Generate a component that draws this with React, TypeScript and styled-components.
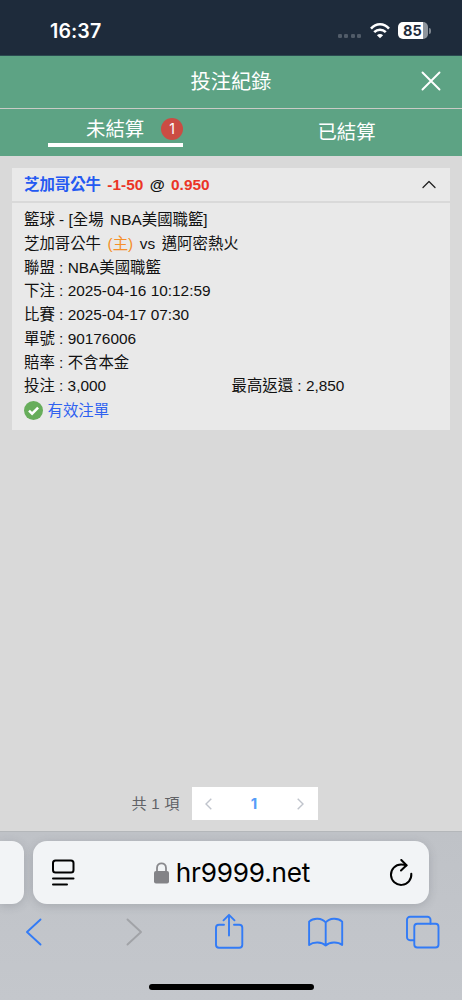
import React from 'react';
import styled, { createGlobalStyle } from 'styled-components';

const GlobalStyle = createGlobalStyle`
  *, *::before, *::after { box-sizing: border-box; }
  body { margin: 0; background: #d9d9d9; }
`;

const Screen = styled.div`
  width: 462px;
  height: 1000px;
  display: flex;
  flex-direction: column;
  overflow: hidden;
  background: #d9d9d9;
  font-family: 'Liberation Sans', 'Noto Sans CJK TC', sans-serif;
  color: #111;
  white-space: nowrap;
  svg { display: block; flex: none; }
`;

const StatusBar = styled.div`
  flex: none;
  height: 56px;
  padding: 6px 31px 0 50px;
  background: #1e2b3b;
  border-bottom: 1px solid #2b4a50;
  display: flex;
  align-items: center;
  justify-content: space-between;
`;

const Clock = styled.span`
  font: 600 19.6px/24px Inter, sans-serif;
  letter-spacing: 0.1px;
  color: #fff;
`;

const StatusIcons = styled.div`
  display: flex;
  align-items: center;
`;

const Dots = styled.div`
  display: flex;
  gap: 2.3px;
  margin: 10px 9px 0 0;
`;

const Dot = styled.i`
  width: 4px;
  height: 4px;
  border-radius: 1.3px;
  background: #515c69;
`;

const Battery = styled.div`
  width: 30px;
  height: 17px;
  margin: 0 0 0 8px;
  padding-right: 1px;
  border-radius: 5px;
  background: linear-gradient(90deg, #fff 25px, #8e959d 25px);
  color: #1e2b3b;
  font: 700 14.5px/17px Inter, sans-serif;
  letter-spacing: 0.1px;
  text-align: center;
`;

const BatteryTip = styled.i`
  width: 2px;
  height: 6px;
  margin-left: 1px;
  border-radius: 0 2px 2px 0;
  background: #7d858e;
`;

const TitleBar = styled.header`
  flex: none;
  height: 53px;
  padding: 0 20px;
  background: #5da384;
  border-bottom: 1px solid #c9cbc6;
  display: grid;
  grid-template-columns: 22px 1fr 22px;
  align-items: center;
  svg { margin-top: -2px; }
`;

const Title = styled.h1`
  margin: -2px 0 0;
  font: 400 20.2px/30px 'Noto Sans CJK TC', sans-serif;
  color: #fff;
  text-align: center;
`;

const Tabs = styled.nav`
  flex: none;
  height: 47px;
  background: #5da384;
  display: grid;
  grid-template-columns: 1fr 1fr;
  justify-items: center;
`;

const Tab = styled.div<{ $active?: boolean }>`
  height: ${p => (p.$active ? '38px' : '44px')};
  width: ${p => (p.$active ? '135px' : 'auto')};
  padding: ${p => (p.$active ? '3px 0 0 38px' : '0')};
  border-bottom: ${p => (p.$active ? '4px solid #fff' : '0')};
  display: flex;
  align-items: center;
  justify-content: space-between;
  font: 400 19.4px/28px 'Noto Sans CJK TC', sans-serif;
  color: #fff;
`;

const Count = styled.span`
  width: 22px;
  height: 22px;
  margin-top: 2px;
  border-radius: 50%;
  background: #cb4c43;
  font: 400 14px/22px Inter, sans-serif;
  text-align: center;
`;

const Content = styled.main`
  flex: 1;
  padding: 12px 12px 11px;
  display: flex;
  flex-direction: column;
  justify-content: space-between;
`;

const Card = styled.section`
  display: flex;
  flex-direction: column;
  gap: 2px;
  font-size: 15.4px;
`;

const CardHead = styled.div`
  height: 33px;
  padding: 0 14px 0 12px;
  background: #e9e9e9;
  display: flex;
  align-items: center;
  justify-content: space-between;
  line-height: 33px;
`;

const Pick = styled.span`
  font-weight: 700;
  word-spacing: 2.1px;
`;

const CardBody = styled.div`
  height: 227px;
  padding: 5px 12px 0;
  background: #e9e9e9;
`;

const Line = styled.div`
  height: 23.75px;
  line-height: 23.75px;
  display: grid;
  grid-template-columns: 207.5px 1fr;
`;

const Spaced = styled.span`
  word-spacing: 2.3px;
`;

const Tint = styled.span<{ $color: string }>`
  color: ${p => p.$color};
`;

const Valid = styled.div`
  height: 25px;
  margin-left: -0.5px;
  display: flex;
  align-items: center;
  gap: 5px;
  line-height: 24px;
  color: #2f62f0;
`;

const Pagination = styled.div`
  display: flex;
  align-items: center;
  align-self: center;
  gap: 12px;
  margin-right: 13px;
  font: 400 15.2px/33px 'Liberation Sans', 'Noto Sans CJK TC', sans-serif;
  word-spacing: 0.4px;
  color: #606266;
`;

const Pager = styled.div`
  width: 126px;
  height: 33px;
  padding: 0 14px 0 13px;
  background: #fff;
  display: flex;
  align-items: center;
  justify-content: space-between;
`;

const PageNumber = styled.span`
  font: 700 15px/33px Inter, sans-serif;
  color: #569df8;
`;

const Browser = styled.footer`
  flex: none;
  height: 169px;
  background: linear-gradient(#bfc2c7, #c4c7cc);
  border-top: 1px solid #b4b7ba;
  display: flex;
  flex-direction: column;
`;

const AddressRow = styled.div`
  height: 73px;
  padding-top: 9px;
  display: flex;
  gap: 9px;
`;

const PreviousTab = styled.div`
  width: 24px;
  height: 63px;
  background: #f2f4f6;
  border-radius: 0 12px 12px 0;
  box-shadow: 0 2px 10px rgba(60, 65, 75, 0.2);
`;

const AddressBar = styled.div`
  width: 396px;
  height: 63px;
  padding: 0 16px 0 18px;
  border-radius: 14px;
  background: #f2f4f6;
  box-shadow: 0 2px 10px rgba(60, 65, 75, 0.2);
  display: flex;
  align-items: center;
  justify-content: space-between;
`;

const Site = styled.div`
  display: flex;
  align-items: center;
  gap: 7px;
  font: 400 26.2px/32px Inter, sans-serif;
  letter-spacing: -0.2px;
  color: #000;
`;

const Toolbar = styled.div`
  height: 44px;
  padding: 0 22px 0 16px;
  display: flex;
  justify-content: space-between;
`;

const ToolIcon = styled.svg<{ $muted?: boolean }>`
  width: 36px;
  height: 44px;
  overflow: visible;
  fill: none;
  stroke: ${p => (p.$muted ? '#a1a3a7' : '#327bf6')};
  stroke-width: 1.9;
  stroke-linecap: round;
  stroke-linejoin: round;
`;

const HomeIndicator = styled.div`
  width: 165px;
  height: 6px;
  margin: 35px 0 0 149px;
  border-radius: 3px;
  background: #000;
`;

const details: [string, string][] = [
  ['聯盟', 'NBA美國職籃'],
  ['下注', '2025-04-16 10:12:59'],
  ['比賽', '2025-04-17 07:30'],
  ['單號', '90176006'],
  ['賠率', '不含本金'],
];

export default function App() {
  return (
    <Screen>
      <GlobalStyle />
      <StatusBar>
        <Clock>16:37</Clock>
        <StatusIcons>
          <Dots><Dot /><Dot /><Dot /><Dot /></Dots>
          <svg width="20" height="16" viewBox="0 0 20 16" fill="none" stroke="#fff" strokeWidth="2.5">
            <path d="M1 5.600C6-.1 14-.1 19 5.600" />
            <path d="M4.200 9.200c3.300-3.400 8.300-3.400 11.600 0" />
            <path d="M10 15.300 6.900 12.200c1.800-1.600 4.400-1.600 6.200 0z" fill="#fff" stroke="none" />
          </svg>
          <Battery>85</Battery>
          <BatteryTip />
        </StatusIcons>
      </StatusBar>
      <TitleBar>
        <span />
        <Title>投注紀錄</Title>
        <svg width="22" height="22" viewBox="0 0 22 22" fill="none" stroke="#fff" strokeWidth="1.9" strokeLinecap="round">
          <path d="M2.500 2.500l17 17M19.500 2.500l-17 17" />
        </svg>
      </TitleBar>
      <Tabs>
        <Tab $active>未結算<Count>1</Count></Tab>
        <Tab>已結算</Tab>
      </Tabs>
      <Content>
        <Card>
          <CardHead>
            <Pick>
              <Tint $color="#2459f2">芝加哥公牛</Tint> <Tint $color="#eb3426">-1-50</Tint> @ <Tint $color="#eb3426">0.950</Tint>
            </Pick>
            <svg width="14" height="9" viewBox="0 0 14 9" fill="none" stroke="#222" strokeWidth="1.3" strokeLinecap="round" strokeLinejoin="round">
              <path d="M1 7.500 7 1.500l6 6" />
            </svg>
          </CardHead>
          <CardBody>
            <Line><span>籃球 - [<Spaced>全場 NBA美國職籃]</Spaced></span></Line>
            <Line><Spaced>芝加哥公牛 <Tint $color="#f58f2a">(主)</Tint> vs 邁阿密熱火</Spaced></Line>
            {details.map(([label, value]) => (
              <Line key={label}><span>{label} : {value}</span></Line>
            ))}
            <Line><span>投注 : 3,000</span><span>最高返還 : 2,850</span></Line>
            <Valid>
              <svg width="19" height="19" viewBox="0 0 19 19">
                <circle cx="9.500" cy="9.500" r="9.500" fill="#67ad5b" />
                <path d="M5 9.600l3.100 3.100 6-6" fill="none" stroke="#fff" strokeWidth="2.500" />
              </svg>
              有效注單
            </Valid>
          </CardBody>
        </Card>
        <Pagination>
          共 1 項
          <Pager>
            <svg width="7" height="12" viewBox="0 0 7 12" fill="none" stroke="#c0c4cc" strokeWidth="1.400"><path d="M6.300.8 1 6l5.300 5.200" /></svg>
            <PageNumber>1</PageNumber>
            <svg width="7" height="12" viewBox="0 0 7 12" fill="none" stroke="#c0c4cc" strokeWidth="1.400"><path d="M.7.8 6 6 .7 11.200" /></svg>
          </Pager>
        </Pagination>
      </Content>
      <Browser>
        <AddressRow>
          <PreviousTab />
          <AddressBar>
            <svg width="24" height="28" viewBox="0 0 24 28" fill="none" stroke="#000" strokeWidth="2" strokeLinecap="round">
              <rect x="2" y="1.500" width="20.500" height="12" rx="2.500" />
              <path d="M2 19.500h20.500M2 25.500h14" />
            </svg>
            <Site>
              <svg width="15" height="22" viewBox="0 0 15 22">
                <path d="M3 10V6C3-.3 12-.3 12 6v4" fill="none" stroke="#89898d" strokeWidth="1.800" />
                <rect x="0" y="9" width="15" height="12.500" rx="2" fill="#838387" />
              </svg>
              hr9999.net
            </Site>
            <svg width="24" height="28" viewBox="0 0 24 28" fill="none" stroke="#000" strokeWidth="2" strokeLinecap="round" strokeLinejoin="round">
              <path d="M22.300 14.700a10.200 10.200 0 1 1-10.200-9.200c1.800 0 3.300.2 5.400.9" />
              <path d="M12.300 1 17.500 6.200 12 11.500" />
            </svg>
          </AddressBar>
        </AddressRow>
        <Toolbar>
          <ToolIcon viewBox="0 0 36 44"><path d="M24.500 14.500 11 27l13.500 12.500" /></ToolIcon>
          <ToolIcon viewBox="0 0 36 44" $muted><path d="M14.500 14.500 28 27 14.500 39.500" /></ToolIcon>
          <ToolIcon viewBox="0 0 36 44">
            <path d="M14 19.700H9a3 3 0 0 0-3 3v17a3 3 0 0 0 3 3h20.300a3 3 0 0 0 3-3v-17a3 3 0 0 0-3-3H24" />
            <path d="M19 30.500V10M13.500 15.300 19 9.800l5.500 5.500" />
          </ToolIcon>
          <ToolIcon viewBox="0 0 36 44">
            <path d="M18.700 17.500c-3.700-4.800-12.300-5-16.600-.9V40c4.300-3.600 12.900-3.400 16.600.6 3.700-4 12.300-4.200 16.500-.6V16.600c-4.200-4.100-12.800-3.900-16.500.9zv23" />
          </ToolIcon>
          <ToolIcon viewBox="0 0 36 44">
            <path d="M10 35.300H6a3 3 0 0 1-3-3V14.800a3 3 0 0 1 3-3h17.500a3 3 0 0 1 3 3V18.800" />
            <rect x="10.300" y="18.800" width="24.200" height="23.700" rx="3" />
          </ToolIcon>
        </Toolbar>
        <HomeIndicator />
      </Browser>
    </Screen>
  );
}
